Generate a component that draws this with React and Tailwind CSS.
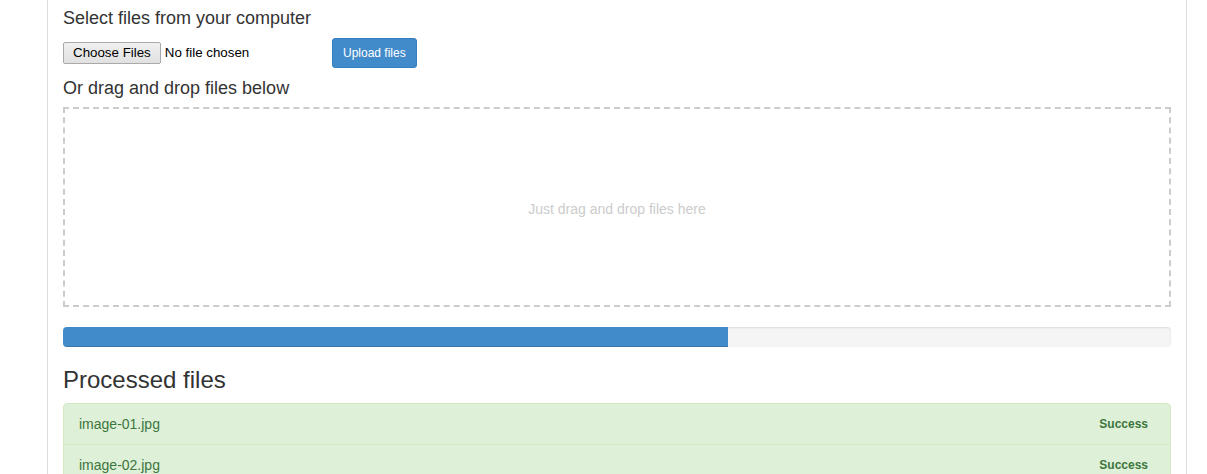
import React from "react";

const files = [
  { name: "image-01.jpg", status: "Success" },
  { name: "image-02.jpg", status: "Success" },
  { name: "image-03.jpg", status: "Success" },
];

export default function App() {
  const progress = 60;

  return (
    <div className="min-h-screen bg-white font-['Liberation_Sans',Arial,sans-serif] text-[14px] text-[#333] overflow-hidden h-[474px]">
      <div className="ml-[47px] w-[1140px] min-h-[474px] border-x border-[#ddd] px-[15px] pt-[8px]">
        {/* Standard form */}
        <h4 className="text-[18px] leading-[20px] mb-[10px]">Select files from your computer</h4>
        <div className="flex items-center h-[30px]">
          <div className="w-[269px] flex items-center">
            <button
              type="button"
              className="h-[22px] px-[9px] text-[13.33px] text-black bg-gradient-to-b from-[#f0f0f0] to-[#e1e1e1] border border-[#a9a9a9] rounded-[2px] leading-none"
            >
              Choose Files
            </button>
            <span className="ml-[4px] text-[13.33px] text-black">No file chosen</span>
          </div>
          <button
            type="button"
            className="h-[30px] px-[10px] text-[12px] text-white bg-[#428bca] border border-[#357ebd] rounded-[3px]"
          >
            Upload files
          </button>
        </div>

        {/* Drop zone */}
        <h4 className="text-[18px] leading-[20px] mt-[10px] mb-[9px]">Or drag and drop files below</h4>
        <div className="h-[200px] pt-[4px] border-2 border-dashed border-[#ccc] flex items-center justify-center text-[#ccc]">
          Just drag and drop files here
        </div>

        {/* Progress bar */}
        <div className="mt-[20px] h-[20px] rounded-[4px] bg-[#f5f5f5] shadow-[inset_0_1px_2px_rgba(0,0,0,0.1)] overflow-hidden">
          <div
            className="h-full bg-[#428bca] shadow-[inset_0_-1px_0_rgba(0,0,0,0.15)]"
            style={{ width: `${progress}%` }}
          ></div>
        </div>

        {/* Upload finished */}
        <h3 className="mt-[20px] mb-[10px] text-[24px] leading-[26.4px]">Processed files</h3>
        <div className="flex flex-col">
          {files.map((f, i) => (
            <div
              key={f.name}
              className={
                "flex items-center justify-between px-[15px] py-[10px] leading-[20px] bg-[#dff0d8] text-[#3c763d] border border-[#d6e9c6] -mb-px " +
                (i === 0 ? "rounded-t-[4px]" : "")
              }
            >
              <span>{f.name}</span>
              <span className="px-[7px] text-[12px] font-bold leading-none">{f.status}</span>
            </div>
          ))}
        </div>
      </div>
    </div>
  );
}
